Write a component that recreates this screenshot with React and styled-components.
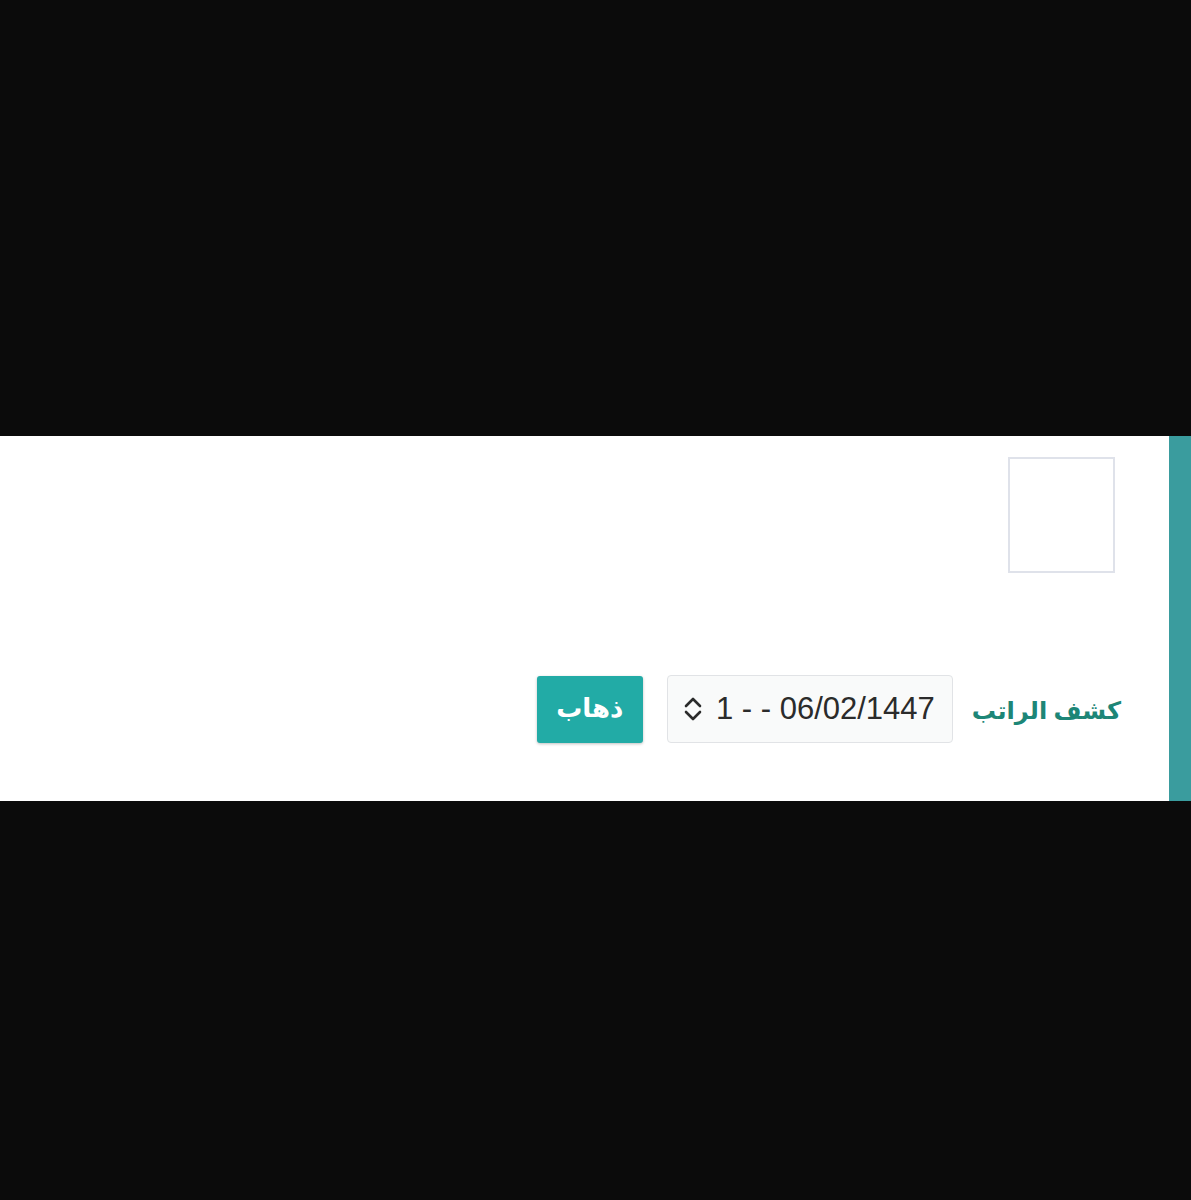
import React from "react";
import styled, { createGlobalStyle } from "styled-components";

const Global = createGlobalStyle`
  html, body { margin: 0; padding: 0; background: #0b0b0b; }
  body { font-family: "Liberation Sans", Arial, sans-serif; }
`;

const Screen = styled.div`
  width: 1191px;
  height: 1200px;
  background: #0b0b0b;
  display: flex;
  flex-direction: column;
  padding-top: 436px;
  box-sizing: border-box;
`;

const Panel = styled.section`
  height: 365px;
  background: #ffffff;
  border-right: 22px solid #3a9c9e;
  box-sizing: border-box;
  direction: rtl;
  display: flex;
  flex-direction: column;
  padding: 21px 54px 0 0;
`;

const Photo = styled.div`
  width: 103px;
  height: 112px;
  border: 2px solid #dfe2ea;
  background: #fff;
`;

const FormRow = styled.div`
  display: flex;
  align-items: center;
  gap: 24px;
  margin-top: 102px;
  margin-right: -6px;
`;

const Label = styled.span`
  font-family: "Noto Sans", "DejaVu Sans", sans-serif;
  font-size: 24.2px;
  font-weight: 700;
  color: #1d8677;
  margin-left: -5px;
`;

const Select = styled.div`
  width: 286px;
  height: 68px;
  box-sizing: border-box;
  border: 1.5px solid #e1e3e6;
  border-radius: 4px;
  background: #f9fafa;
  display: flex;
  align-items: center;
  padding: 0 17px 0 14px;
  gap: 12px;
  direction: ltr;
  flex-direction: row-reverse;
  justify-content: flex-start;
`;

const Value = styled.span`
  font-family: "Liberation Sans", Arial, sans-serif;
  font-size: 31px;
  color: #2b2b2b;
  white-space: nowrap;
`;

const Go = styled.button`
  width: 106px;
  height: 67px;
  border: none;
  border-radius: 3px;
  background: #22aba6;
  color: #fff;
  font-family: "Noto Sans", "DejaVu Sans", sans-serif;
  font-size: 26px;
  font-weight: 700;
  box-shadow: 0 1px 3px rgba(0,0,0,0.25);
  padding: 0 0 4px;
`;

const Chevrons = () => (
  <svg width="22" height="26" viewBox="0 0 22 26" fill="none" stroke="#2b2b2b" strokeWidth="2.6" strokeLinecap="round" strokeLinejoin="round">
    <path d="M4 10 L11 3 L18 10" />
    <path d="M4 16 L11 23 L18 16" />
  </svg>
);

export default function App() {
  return (
    <>
      <Global />
      <Screen>
        <Panel>
          <Photo />
          <FormRow>
            <Label>كشف الراتب</Label>
            <Select>
              <Value>1 - - 06/02/1447</Value>
              <Chevrons />
            </Select>
            <Go>ذهاب</Go>
          </FormRow>
        </Panel>
      </Screen>
    </>
  );
}
